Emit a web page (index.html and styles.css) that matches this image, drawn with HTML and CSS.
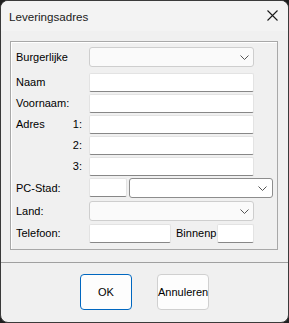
FILE: index.html
```html
<!DOCTYPE html>
<html lang="nl">
<head>
    <meta charset="UTF-8">
    <title>Leveringsadres</title>
    <link rel="stylesheet" href="styles.css">
</head>
<body>
    <div class="window">
        <div class="titlebar">
            <span class="title">Leveringsadres</span>
            <svg class="close" width="11" height="11" viewBox="0 0 11 11">
                <path d="M0.5 0.5 L10.5 10.5 M10.5 0.5 L0.5 10.5" stroke="#1a1a1a" stroke-width="1.1" fill="none"/>
            </svg>
        </div>

        <div class="content">
            <div class="group">
                <div class="form">
                    <label class="lbl">Burgerlijke</label>
                    <div class="combo wide">
                        <svg class="chev" width="9" height="5" viewBox="0 0 9 5"><path d="M0.5 0.5 L4.5 4.5 L8.5 0.5" stroke="#555" fill="none"/></svg>
                    </div>

                    <label class="lbl">Naam</label>
                    <div class="field wide"></div>

                    <label class="lbl">Voornaam:</label>
                    <div class="field wide"></div>

                    <label class="lbl split"><span>Adres</span><span>1:</span></label>
                    <div class="field wide"></div>

                    <label class="lbl split"><span></span><span>2:</span></label>
                    <div class="field wide"></div>

                    <label class="lbl split"><span></span><span>3:</span></label>
                    <div class="field wide"></div>

                    <label class="lbl tall">PC-Stad:</label>
                    <div class="pair">
                        <div class="field postcode"></div>
                        <div class="combo city">
                            <svg class="chev" width="9" height="5" viewBox="0 0 9 5"><path d="M0.5 0.5 L4.5 4.5 L8.5 0.5" stroke="#555" fill="none"/></svg>
                        </div>
                    </div>

                    <label class="lbl tall">Land:</label>
                    <div class="combo wide">
                        <svg class="chev" width="9" height="5" viewBox="0 0 9 5"><path d="M0.5 0.5 L4.5 4.5 L8.5 0.5" stroke="#555" fill="none"/></svg>
                    </div>

                    <label class="lbl">Telefoon:</label>
                    <div class="pair">
                        <div class="field phone"></div>
                        <span class="inline-lbl">Binnenp</span>
                        <div class="field ext"></div>
                    </div>
                </div>
            </div>
        </div>

        <div class="separator"></div>

        <div class="buttons">
            <button class="btn default">OK</button>
            <button class="btn">Annuleren</button>
        </div>
    </div>
</body>
</html>
```

FILE: styles.css
```css
html {
  background: #1f1f1f;
}
body {
  margin: 0;
  font-family: "Liberation Sans", Arial, sans-serif;
  font-size: 11px;
  color: #000;
}

/* Dialog frame */
.window {
  width: 289px;
  height: 323px;
  box-sizing: border-box;
  border: 1px solid #3a3a3a;
  border-radius: 8px;
  background: #f0f0f0;
  overflow: hidden;
  display: flex;
  flex-direction: column;
}

.titlebar {
  height: 30px;
  flex: none;
  display: flex;
  align-items: center;
  justify-content: space-between;
  padding: 0 10px 0 8px;
  background: #f3f3f3;
}
.title {
  font-size: 11.6px;
  color: #1a1a1a;
}
.close {
  display: block;
  margin-top: -2px;
}

.content {
  flex: none;
  padding: 10px 0 0 9px;
}

/* Group box with etched border */
.group {
  width: 268px;
  height: 209px;
  box-sizing: border-box;
  border: 1px solid #a8a8a8;
  box-shadow: inset 1px 1px 0 #fff;
  padding: 5px 0 0 5px;
}

.form {
  display: grid;
  grid-template-columns: 73px 184px;
  grid-template-rows: 26px 21px 21px 21px 21px 21px 23px 23px 19px;
  align-items: start;
}

.lbl {
  line-height: 19px;
  white-space: nowrap;
}
.lbl.tall {
  line-height: 20px;
}
.lbl:first-child {
  line-height: 20px;
}
.lbl.split {
  display: flex;
  justify-content: space-between;
  padding-right: 7px;
}

/* Text boxes */
.field {
  height: 19px;
  box-sizing: border-box;
  background: #fff;
  border: 1px solid #e3e3e3;
  border-bottom-color: #878787;
  border-radius: 2px;
}
.wide {
  width: 165px;
}

/* Combo boxes */
.combo {
  height: 20px;
  box-sizing: border-box;
  background: #fafafa;
  border: 1px solid #cecece;
  border-radius: 3px;
  display: flex;
  align-items: center;
  justify-content: flex-end;
  padding-right: 4px;
}
.combo.city {
  width: 144px;
  background: #fff;
  border-color: #8d8d8d;
  padding-right: 5px;
}
.chev {
  display: block;
}

.pair {
  display: flex;
  align-items: flex-start;
}
.postcode {
  width: 38px;
  margin-right: 2px;
}
.phone {
  width: 82px;
}
.inline-lbl {
  width: 46px;
  line-height: 19px;
  padding-left: 5px;
  box-sizing: border-box;
  white-space: nowrap;
}
.ext {
  width: 37px;
}

.separator {
  margin-top: 12px;
  height: 1px;
  background: #a0a0a0;
  flex: none;
}

.buttons {
  display: flex;
  justify-content: center;
  gap: 25px;
  padding-top: 11px;
}
.btn {
  width: 52px;
  height: 36px;
  padding: 0;
  font-family: "Liberation Sans", Arial, sans-serif;
  font-size: 11px;
  color: #000;
  background: #fdfdfd;
  border: 1px solid #d0d0d0;
  border-radius: 4px;
  white-space: nowrap;
  overflow: visible;
}
.btn.default {
  border-color: #0067c0;
}
```
